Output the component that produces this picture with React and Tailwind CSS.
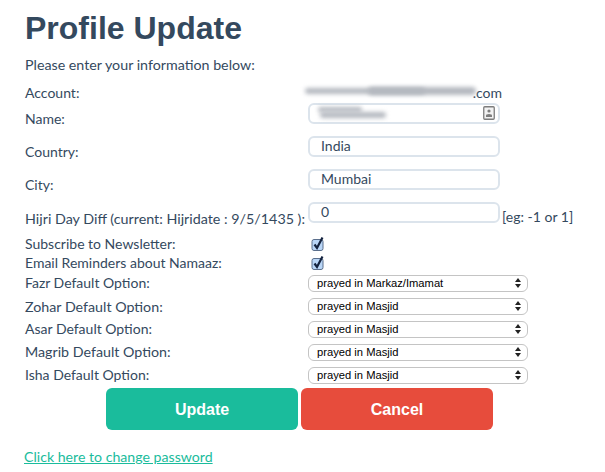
import React from 'react';

const selects = [
  { label: 'Fazr Default Option:', value: 'prayed in Markaz/Imamat', labelClass: 'pb-[2px]' },
  { label: 'Zohar Default Option:', value: 'prayed in Masjid', labelClass: 'text-[14.25px]' },
  { label: 'Asar Default Option:', value: 'prayed in Masjid', labelClass: 'pb-[2px]' },
  { label: 'Magrib Default Option:', value: 'prayed in Masjid', labelClass: 'text-[14.25px] pb-[2px]' },
  { label: 'Isha Default Option:', value: 'prayed in Masjid', labelClass: 'pb-[2px]' },
];

const Check = () => (
  <svg width="14" height="16" viewBox="0 0 14 16" className="block">
    <rect x="1" y="3.5" width="11" height="11" rx="2" fill="#b9d6f7" stroke="#5b6f8c" strokeWidth="1" />
    <path d="M3.5 8.5 L6 12 L11.5 1.5" fill="none" stroke="#14233f" strokeWidth="2.2" />
  </svg>
);

const Smudge = ({ className }) => (
  <div className={`rounded-full blur-[2px] bg-[#b4b8bf] ${className}`}></div>
);

const TextRow = ({ label, value, children, labelClass = '' }) => (
  <div className="flex h-[33px]">
    <label className={`w-[283px] shrink-0 whitespace-nowrap ${labelClass}`}>{label}</label>
    <div className="relative w-[192px] shrink-0">
      <input
        type="text"
        readOnly
        value={value}
        className="w-full h-[21px] px-[11px] pb-[2px] rounded-[6px] border-2 border-[#dce4ec] bg-white text-[14px] text-[#34495e] outline-none"
      />
      {children}
    </div>
  </div>
);

const App = () => {
  return (
    <div className="w-[605px] h-[472px] overflow-hidden bg-white pl-[25px] text-[#34495e] text-[14px] leading-[19px] font-['Lato',sans-serif]">
      <h1 className="pt-[9px] h-[55px] text-[32px] leading-[38px] font-bold font-['Liberation_Sans',sans-serif]">Profile Update</h1>
      <p className="h-[28px] text-[14.25px]">Please enter your information below:</p>

      <div className="flex h-[20px]">
        <label className="w-[283px] shrink-0">Account:</label>
        <div className="relative w-[194px] text-right">
          <Smudge className="absolute left-[-3px] top-[5px] w-[120px] h-[6px]" />
          <Smudge className="absolute left-[60px] top-[4px] w-[108px] h-[8px]" />
          .com
        </div>
      </div>

      <TextRow label="Name:" value="" labelClass="pt-[6px]">
        <Smudge className="absolute left-[10px] top-[4px] w-[44px] h-[5px]" />
        <Smudge className="absolute left-[12px] top-[9px] w-[66px] h-[6px]" />
        <svg width="12" height="14" viewBox="0 0 12 14" className="absolute right-[5px] top-[3px]">
          <rect x="0.75" y="0.75" width="10.5" height="12.5" rx="1" fill="#f2f2f2" stroke="#7d7d7d" strokeWidth="1.3" />
          <circle cx="6" cy="5" r="1.6" fill="#7d7d7d" />
          <path d="M3 11 V9.5 Q3 8 6 8 Q9 8 9 9.5 V11 Z" fill="#7d7d7d" />
        </svg>
      </TextRow>
      <TextRow label="Country:" value="India" labelClass="pt-[6px]" />
      <TextRow label="City:" value="Mumbai" labelClass="pt-[6px]" />

      <div className="flex h-[32px]">
        <label className="w-[283px] shrink-0 whitespace-nowrap pt-[7px] text-[14.3px]">Hijri Day Diff (current: Hijridate : 9/5/1435 ):</label>
        <input
          type="text"
          readOnly
          value="0"
          className="w-[192px] shrink-0 h-[21px] px-[11px] pb-[3px] rounded-[6px] border-2 border-[#dce4ec] bg-white text-[14px] text-[#34495e] outline-none"
        />
        <span className="pl-[2px] pt-[5px] whitespace-nowrap">[eg: -1 or 1]</span>
      </div>

      <div className="flex h-[19px] items-center">
        <label className="w-[286px] shrink-0">Subscribe to Newsletter:</label>
        <Check />
      </div>
      <div className="flex h-[19px] items-center">
        <label className="w-[286px] shrink-0">Email Reminders about Namaaz:</label>
        <Check />
      </div>

      {selects.map((s) => (
        <div key={s.label} className="flex h-[23px] items-center">
          <label className={`w-[283px] shrink-0 whitespace-nowrap ${s.labelClass || ''}`}>{s.label}</label>
          <div className="relative w-[220px] h-[17px]">
            <select
              defaultValue={s.value}
              className="block w-full h-[17px] appearance-none rounded-[6px] border border-[#c4c4c4] bg-white pl-[8px] py-0 leading-[13px] text-[11.2px] text-black outline-none font-['Liberation_Sans',sans-serif]"
            >
              <option>{s.value}</option>
            </select>
            <svg width="6" height="10" viewBox="0 0 6 10" className="absolute right-[7px] top-[3px] pointer-events-none">
              <path d="M3 0 L6 4 H0 Z M3 10 L0 6 H6 Z" fill="#222" />
            </svg>
          </div>
        </div>
      ))}

      <div className="flex gap-[3px] pl-[81px] pt-[1px]">
        <button className="w-[192px] h-[42px] rounded-[6px] bg-[#1abc9c] text-white text-[16px] font-bold font-['Liberation_Sans',sans-serif]">Update</button>
        <button className="w-[192px] h-[42px] rounded-[6px] bg-[#e74c3c] text-white text-[16px] font-bold font-['Liberation_Sans',sans-serif]">Cancel</button>
      </div>

      <a href="#" className="inline-block mt-[17px] ml-[-1px] text-[14.15px] text-[#1abc9c] underline">Click here to change password</a>
    </div>
  );
};

export default App;
